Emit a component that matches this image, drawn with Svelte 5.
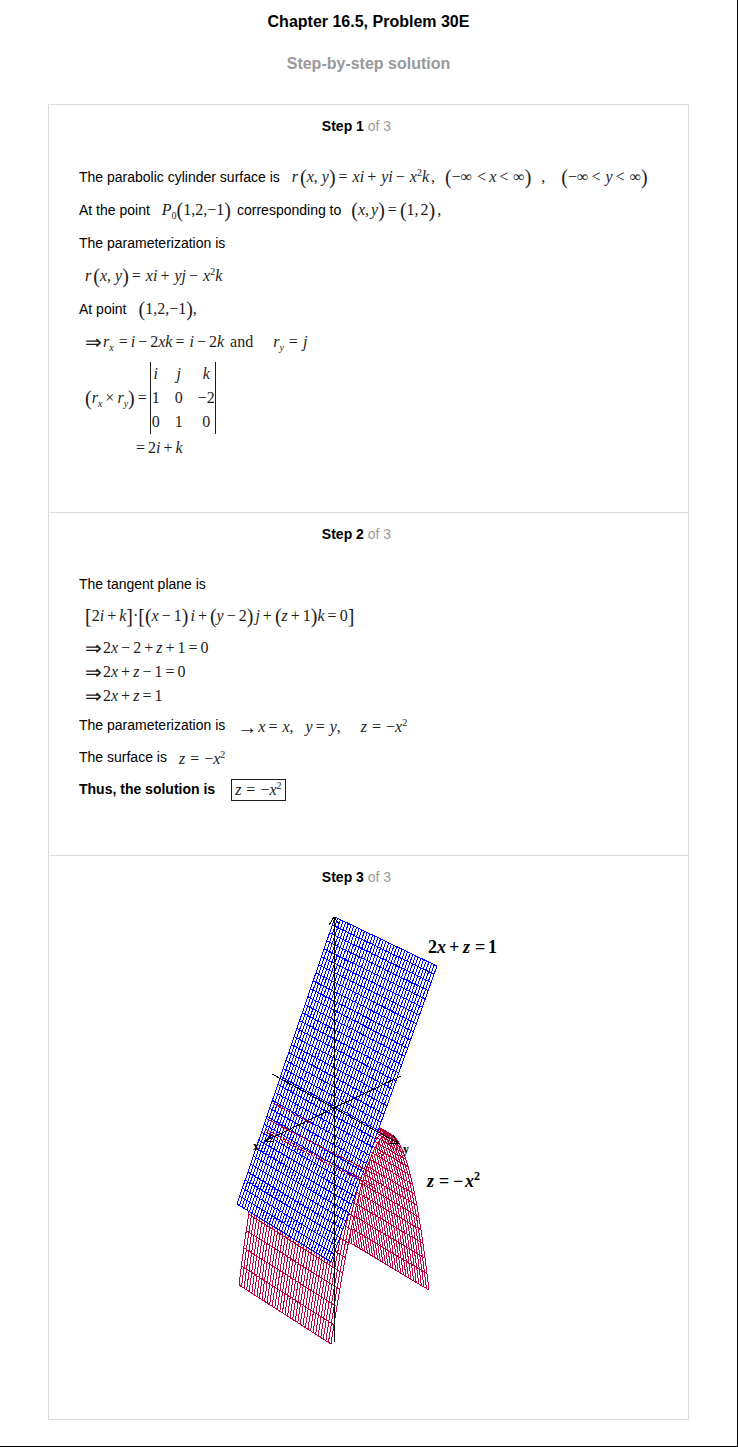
<script>
  // Formula notation: letters are italic, _ and ^ take one character,
  // "~" is a narrow gap, "&" a wide one, and {word} stays upright.
  function parse(src) {
    const out = [];
    for (let i = 0; i < src.length; i++) {
      const c = src[i];
      if (c === '_') {
        const text = src[++i];
        out.push({ kind: /\d/.test(text) ? 'sub digit' : 'sub', text });
      } else if (c === '^') out.push({ kind: 'sup', text: src[++i] });
      else if (c === '{') {
        const end = src.indexOf('}', i);
        out.push({ kind: 'word', text: src.slice(i + 1, end) });
        i = end;
      } else if (c === '~') out.push({ kind: 'thin', text: '' });
      else if (c === '&') out.push({ kind: 'wide', text: '' });
      else if ('()[]'.includes(c)) out.push({ kind: 'fence', text: c });
      else if ('+=<×'.includes(c)) out.push({ kind: 'op', text: c });
      else if (c === '-') out.push({ kind: 'op', text: '−' });
      else if (c === '!') out.push({ kind: 'word', text: '−' });
      else if ('⇒→'.includes(c)) out.push({ kind: 'arrow', text: c });
      else if (/[a-zA-Z]/.test(c)) out.push({ kind: 'var', text: c });
      else out.push({ kind: 'word', text: c });
    }
    return out;
  }

  const range = (n) => Array.from({ length: n + 1 }, (_, i) => i / n);
  const mix = (p, q, s) => [p[0] + (q[0] - p[0]) * s, p[1] + (q[1] - p[1]) * s];
  const path = (pts) => 'M' + pts.map((p) => p.map((n) => n.toFixed(1)).join(' ')).join('L');

  // Plane 2x + z = 1
  const tl = [107, 12], tr = [209, 61], bl = [9, 299], br = [103, 357];
  const planeOutline = path([tl, tr, br, bl]) + 'Z';
  const planeLines =
    range(38).map((s) => path([mix(tl, tr, s), mix(bl, br, s)])).join('') +
    range(36).map((s) => path([mix(tl, bl, s), mix(tr, br, s)])).join('');

  // Cylinder z = -x^2, between its two end profiles
  const near = (t) => [62 + 54 * t + 3 * t * t, 174 - 22 * t + 184 * t * t];
  const far = (t) => [157 + 49 * t - 5 * t * t, 230 - 27 * t + 182 * t * t];
  const at = (t, s) => mix(near(t), far(t), s);
  const half = range(20);
  function sheet(sign, columns) {
    const rows = half.map((t) => path([near(sign * t), far(sign * t)]));
    const cols = range(columns).map((s) => path(half.map((t) => at(sign * t, s))));
    return rows.join('') + cols.join('');
  }
  const outline = (sign) =>
    path([...half.map((t) => near(sign * t)), ...half.map((t) => far(sign * t)).reverse()]) + 'Z';
</script>

{#snippet math(src)}
  <span class="math">{#each parse(src) as t}<span class={t.kind}>{t.text}</span>{/each}</span>
{/snippet}

{#snippet title(n)}
  <h3><b>Step {n}</b> of 3</h3>
{/snippet}

<main>
  <h1>Chapter 16.5, Problem 30E</h1>
  <h2>Step-by-step solution</h2>

  <div class="card">
    <section class="first">
      {@render title(1)}
      <p>The parabolic cylinder surface is {@render math('r~(x,~~y)=~xi+~yi-~x^2k~,&~(!∞~<x<~∞)&~,&&(!∞<~y<~∞)')}</p>
      <p>At the point {@render math('P_0(1,2,!1)')}<span class="after">corresponding to</span> {@render math('(x,~y)=(1,~2)~,')}</p>
      <p>The parameterization is</p>
      <p class="display">{@render math('r~(x,~~y)=~xi+~yj-~x^2k')}</p>
      <p>At point {@render math('(1,2,!1),')}</p>
      <p class="display">{@render math('⇒r_x~=i-2xk=~i-2k~~~{and}&&~~r_y~=~j')}</p>
      <div class="display cross">
        {@render math('(r_x×r_y)=')}
        <table aria-label="Determinant">
          <tbody>
            <tr><td><i>i</i></td><td><i>j</i></td><td><i>k</i></td></tr>
            <tr><td>1</td><td>0</td><td>−2</td></tr>
            <tr><td>0</td><td>1</td><td>0</td></tr>
          </tbody>
        </table>
      </div>
      <p class="display tight result">{@render math('=2i+k')}</p>
    </section>

    <section class="second">
      {@render title(2)}
      <p>The tangent plane is</p>
      <p class="display">{@render math('[2i+k]·[(x-1)~i+(y-2)~j+(z+1)k=0]')}</p>
      <div class="chain">
        <p class="display tight">{@render math('⇒2x-2+z+1=0')}</p>
        <p class="display tight">{@render math('⇒2x+z-1=0')}</p>
        <p class="display tight">{@render math('⇒2x+z=1')}</p>
      </div>
      <p>The parameterization is <span class="low">{@render math('→x=~x,&~~y=~y,&&~~z~=~!x^2')}</span></p>
      <p>The surface is <span class="low">{@render math('z~=~!x^2')}</span></p>
      <p><b>Thus, the solution is</b> <span class="boxed">{@render math('z~=~!x^2')}</span></p>
    </section>

    <section class="third">
      {@render title(3)}
      <svg width="281" height="450" viewBox="0 0 281 450" role="img" aria-label="Plane and parabolic cylinder">
        <g fill="none" shape-rendering="crispEdges">
          <path class="red" d={sheet(1, 32)} />
          <path fill="#fff" d={outline(-1)} />
          <path class="red" d={sheet(-1, 36)} />
          <path fill="#fff" d={planeOutline} />
          <path class="blue" d={planeLines} />
          <path class="red dashed" d="M45 198L86 220M149 247L158 252" />
          <path class="red" d="M39 214L150 271" />
          <path class="red dashed" d="M37 224L148 281M38 227L149 284" />
          <path class="axis" d="M106.500 12V437M101 20L106 12L111 19M44 169L170 238M173 171L37 236M161 238L170 238L165 230M46 228L37 236L46 237" />
        </g>
        <g class="label">
          <text x="200" y="48">2<tspan font-style="italic">x</tspan></text>
          <text x="221" y="48">+</text>
          <text x="235" y="48" font-style="italic">z</text>
          <text x="247" y="48">=</text>
          <text x="260" y="48">1</text>
          <text x="199" y="282" font-style="italic">z</text>
          <text x="211" y="282">=</text>
          <text x="225" y="282">−</text>
          <text x="237" y="282" font-style="italic">x</text>
          <text class="small" x="246" y="275">2</text>
          <text class="small" x="25" y="245">x</text>
          <text class="small" x="175" y="248">y</text>
        </g>
      </svg>
    </section>
  </div>
</main>

<style>
  :global(body) { background: #fff; }
  main {
    box-sizing: border-box;
    border-right: 1px solid #000;
    border-bottom: 1px solid #000;
    padding: 12px 48px 26px;
    font-family: "Liberation Sans", Arial, sans-serif;
    font-size: 14px;
    color: #000;
  }
  h1, h2 {
    margin: 0;
    font-size: 16px;
    line-height: 20px;
    text-align: center;
  }
  h2 { margin: 22px 0 30px; color: #999; }
  .card { border: 1px solid #dcdcdc; }
  section { padding: 13px 30px 50px; }
  section + section { border-top: 1px solid #dcdcdc; }
  h3 {
    margin: 0 24px 26px 0;
    font-size: 14px;
    line-height: 16px;
    font-weight: 400;
    text-align: center;
    color: #999;
  }
  h3 b { color: #000; }
  p {
    display: flex;
    align-items: center;
    gap: 12px;
    min-height: 32px;
    margin: 0;
    white-space: nowrap;
  }
  .first { padding-bottom: 52px; }
  .first > p { min-height: 33px; }
  .after { margin: 0 -2px 0 -6px; }
  .display { padding-left: 6px; }
  .first > .tight, .tight { min-height: 24px; }
  .result { padding-left: 54px; margin-top: 2px; }
  .chain { margin: 4px 0 1px; }

  .math {
    display: inline-flex;
    align-items: center;
    height: 24px;
    font-family: "Liberation Serif", "Times New Roman", serif;
    font-size: 16px;
    line-height: 20px;
    color: #1c1c1c;
  }
  .var { font-style: italic; }
  .op { margin: 0 3px; }
  .fence { font-size: 20px; }
  .arrow { font-size: 20px; margin-right: 1px; }
  .sub, .sup { font-size: 10px; line-height: 12px; }
  .sub { align-self: flex-end; font-style: italic; }
  .digit { font-style: normal; }
  .sup { align-self: flex-start; margin-top: 2px; }
  .thin { width: 2px; }
  .wide { width: 8px; }
  .low { display: inline-flex; padding-top: 4px; }
  .cross {
    display: flex;
    align-items: center;
    margin: 4px 0 0;
  }
  table {
    border-collapse: collapse;
    border: solid #1c1c1c;
    border-width: 0 1px;
    font: 16px/24px "Liberation Serif", "Times New Roman", serif;
    color: #1c1c1c;
  }
  td { padding: 0 0 0 15px; text-align: center; }
  td:first-child { padding: 0 0 0 1px; }
  .boxed {
    display: inline-flex;
    border: 1px solid #1c1c1c;
    padding: 0 3px;
    margin: 1px 0 0 4px;
  }
  .boxed .math { height: 20px; }
  .boxed .sup { margin-top: 0; }
  .third { padding-bottom: 64px; }
  .third h3 { margin-bottom: 20px; }
  svg { display: block; margin: 0 auto; }
  .red { stroke: #b8003c; }
  .dashed { stroke-dasharray: 4 1; }
  .blue { stroke: #00f; }
  .axis { stroke: #000; }
  .label {
    font: 700 18px "Liberation Serif", "Times New Roman", serif;
  }
  .small { font-size: 12px; }
</style>
